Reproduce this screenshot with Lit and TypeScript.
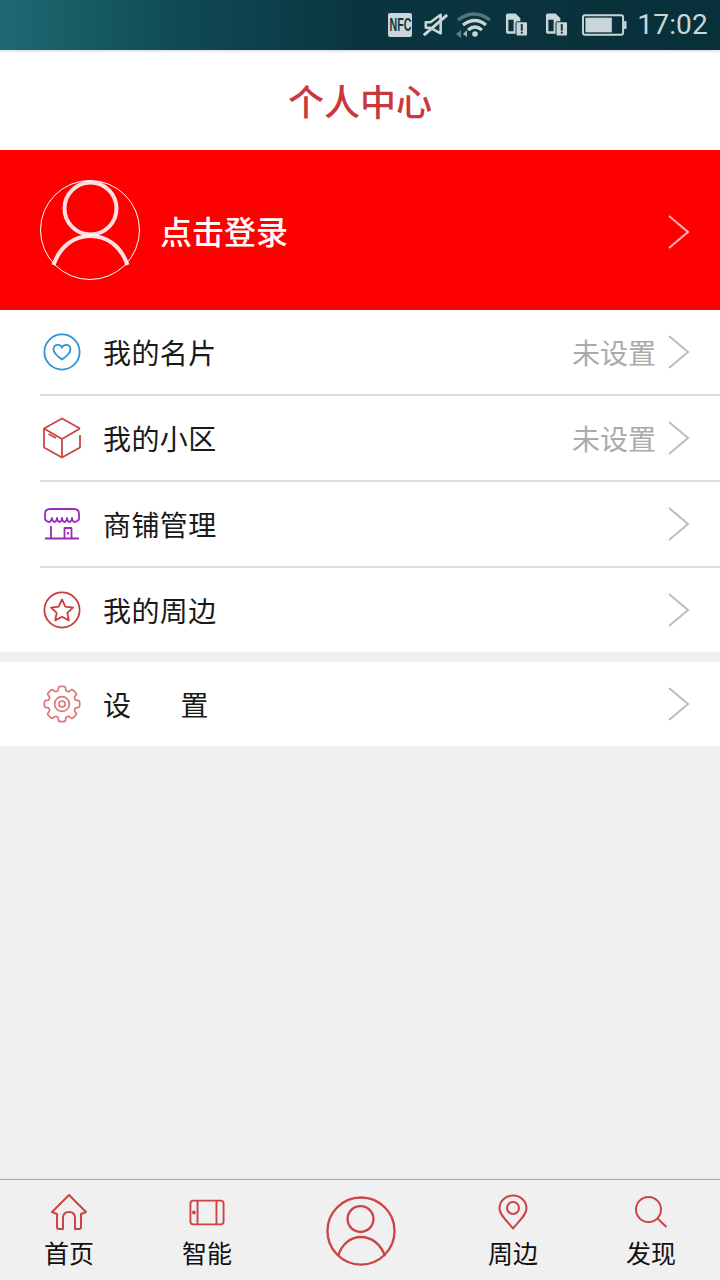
import { LitElement, html, css } from "lit";
import { customElement } from "lit/decorators.js";

const chevron = html`<svg class="chev" width="24" height="36" viewBox="0 0 24 36"><path d="M2 2 L21 18 L2 34" fill="none" stroke="currentColor" stroke-width="2"/></svg>`;

const red = "#cc4444";

// Eight flat-topped cog teeth around a centre of (19, 19), with softened corners.
function gearPath(): string {
  const pts: [number, number][] = [];
  const polar = (deg: number, r: number): [number, number] => {
    const a = ((deg - 90) * Math.PI) / 180;
    return [19 + r * Math.cos(a), 19 + r * Math.sin(a)];
  };
  for (let i = 0; i < 8; i++) {
    const c = i * 45;
    pts.push(polar(c - 11, 18), polar(c + 11, 18), polar(c + 16, 13.8), polar(c + 29, 13.8));
  }
  const lerp = (a: [number, number], b: [number, number], t: number) =>
    `${(a[0] + (b[0] - a[0]) * t).toFixed(2)} ${(a[1] + (b[1] - a[1]) * t).toFixed(2)}`;
  let d = "";
  pts.forEach((p, i) => {
    const prev = pts[(i + pts.length - 1) % pts.length];
    const next = pts[(i + 1) % pts.length];
    d += `${i === 0 ? "M" : "L"}${lerp(p, prev, 0.35)} Q${p[0].toFixed(2)} ${p[1].toFixed(2)} ${lerp(p, next, 0.35)} `;
  });
  return d + "Z";
}

const icons: Record<string, unknown> = {
  heart: html`<svg width="40" height="40" viewBox="0 0 40 40" fill="none" stroke="#2b96d6" stroke-width="1.8"><circle cx="20" cy="20" r="17.6"/><path d="M20 27.5 C15 24 11.5 21 11.5 17.2 C11.5 14.4 13.6 12.8 15.8 12.8 C17.6 12.8 19.2 13.7 20 15.4 C20.8 13.7 22.4 12.8 24.2 12.8 C26.4 12.8 28.5 14.4 28.5 17.2 C28.5 21 25 24 20 27.5 Z"/></svg>`,
  box: html`<svg width="40" height="42" viewBox="0 0 40 42" fill="none" stroke="${red}" stroke-width="1.8" stroke-linejoin="round"><path d="M38 11.5 L20 1.5 L2 11.5 V30.5 L20 40.5 L38 30.5 V18"/><path d="M2 11.5 L20 22 L38 11.5 M20 22 V40.5"/><path d="M6.5 17 L14 21"/></svg>`,
  shop: html`<svg width="38" height="34" viewBox="0 0 38 34" fill="none" stroke="#9a2bc0" stroke-width="1.8" stroke-linejoin="round"><path d="M3 14 L2 12 V7 Q2 2 7 2 H31 Q36 2 36 7 V12 L35 14"/><path d="M3 13 Q4 15 6 15 Q8 15 9 11 Q9.5 15 11.5 15 Q13.5 15 14 11 Q14.5 15 16.5 15 Q18.5 15 19 11 Q19.5 15 21.5 15 Q23.5 15 24 11 Q24.5 15 26.5 15 Q28.5 15 29 11 Q29.5 15 31.5 15 Q33.5 15 35 13"/><path d="M2 31.5 H36 M8 19 V31 M21.5 31 V21 H28.5 V31 M25 25 V27.5"/></svg>`,
  star: html`<svg width="38" height="38" viewBox="0 0 38 38" fill="none" stroke="#cc3c3c" stroke-width="1.8" stroke-linejoin="round"><circle cx="19" cy="19" r="17.6"/><path d="M19 8.5 L22.3 15.6 L30 16.6 L24.3 21.8 L25.8 29.4 L19 25.7 L12.2 29.4 L13.7 21.8 L8 16.6 L15.7 15.6 Z"/></svg>`,
  gear: html`<svg width="38" height="38" viewBox="0 0 38 38" fill="none" stroke="#df7676" stroke-width="1.7"><path d="${gearPath()}"/><circle cx="19" cy="19" r="7.4"/><circle cx="19" cy="19" r="3"/></svg>`,
  home: html`<svg width="38" height="38" viewBox="0 0 38 38" fill="none" stroke="${red}" stroke-width="2" stroke-linejoin="round"><path d="M19 2 L36 19 L31 21 V34 Q31 36 29 36 H25 V25 Q25 19 19 19 Q13 19 13 25 V36 H9 Q7 36 7 34 V21 L2 19 Z"/></svg>`,
  tablet: html`<svg width="36" height="27" viewBox="0 0 38 28" fill="none" stroke="${red}" stroke-width="2"><rect x="1.5" y="1.5" width="35" height="25" rx="3"/><path d="M9 1.5 V26.5 M29 1.5 V26.5"/><circle cx="5.2" cy="14" r="1" fill="${red}"/></svg>`,
  pin: html`<svg width="30" height="36" viewBox="0 0 30 36" fill="none" stroke="${red}" stroke-width="2" stroke-linejoin="round"><path d="M15 34.5 C8 26 1.5 20.5 1.5 14.5 C1.5 7 7.5 1.5 15 1.5 C22.5 1.5 28.5 7 28.5 14.5 C28.5 20.5 22 26 15 34.5 Z"/><circle cx="15" cy="14" r="6"/></svg>`,
  search: html`<svg width="34" height="34" viewBox="0 0 34 34" fill="none" stroke="${red}" stroke-width="2"><circle cx="14.5" cy="14.5" r="12.5"/><path d="M23.5 23.5 L32.5 32"/></svg>`,
};

const rows1 = [
  { icon: "heart", label: "我的名片", value: "未设置" },
  { icon: "box", label: "我的小区", value: "未设置" },
  { icon: "shop", label: "商铺管理", value: "" },
  { icon: "star", label: "我的周边", value: "" },
];

const tabs = [
  { icon: "home", label: "首页" },
  { icon: "tablet", label: "智能" },
  { icon: "", label: "" },
  { icon: "pin", label: "周边" },
  { icon: "search", label: "发现" },
];

@customElement("app-root")
export class AppRoot extends LitElement {
  static styles = css`
    :host {
      display: flex;
      flex-direction: column;
      width: 720px;
      height: 1280px;
      background: #efefef;
      font-family: "Noto Sans CJK SC", "Liberation Sans", sans-serif;
      overflow: hidden;
    }
    .status {
      height: 50px;
      flex: none;
      background: linear-gradient(90deg, #1e6a72 0%, #0f4a54 25%, #0a3540 50%, #08303a 100%);
      display: flex;
      align-items: center;
      justify-content: flex-end;
      color: #c9d6d8;
      box-shadow: 0 1px 3px rgba(0, 0, 0, 0.18);
      position: relative;
    }
    .status svg { display: block; flex: none; }
    .nfc {
      width: 24px; height: 24px; margin-right: 11px; background: #c9d6d8; color: #0c3a44;
      border-radius: 2px; display: flex; align-items: center; justify-content: center; flex: none;
    }
    .nfc span { font: 700 19px/24px "Liberation Sans", sans-serif; display: block; transform: scaleX(0.56); white-space: nowrap; }
    .mute { margin-right: 7px; }
    .wifi { margin-right: 13px; }
    .sim { margin-right: 17px; }
    .sim2 { margin-right: 14px; }
    .batt { margin-right: 10px; }
    .time { font: 400 28px/50px Roboto, sans-serif; margin-right: 12px; letter-spacing: 0.2px; }

    .title {
      height: 100px; flex: none; background: #fff; display: flex; align-items: center; justify-content: center;
      color: #c9383c; font-size: 36px; font-weight: 500; line-height: 1;
    }
    .banner {
      height: 160px; flex: none; background: #ff0000; display: flex; align-items: center;
      padding: 0 29px 0 40px; color: #fff; box-sizing: border-box;
    }
    .avatar { width: 100px; height: 100px; flex: none; margin-right: 20px; display: block; }
    .login { flex: 1; font-size: 32px; font-weight: 500; line-height: 1; }
    .banner .chev { color: #ffb3b3; margin-top: 3px; }

    .group { background: #fff; flex: none; }
    .group.gap { margin-top: 10px; }
    .row {
      display: flex; align-items: center; height: 86px; margin-left: 40px; padding-right: 29px;
      border-bottom: 2px solid #dcdcdc; box-sizing: border-box; color: #1a1a1a;
    }
    .row:last-child { border-bottom: 0; height: 84px; }
    .ico { width: 44px; display: flex; justify-content: center; align-items: center; margin-right: 19px; flex: none; }
    .label { flex: 1; font-size: 28px; line-height: 1; letter-spacing: 0.4px; }
    .label.spread { display: flex; gap: 49px; }
    .value { font-size: 28px; line-height: 1; color: #ababab; margin-right: 11px; }
    .row .chev { color: #bdbdbd; flex: none; }

    .spacer { flex: 1; }
    .tabbar {
      flex: none; height: 101px; border-top: 1px solid #a9a9a9; box-sizing: border-box; background: #f0f0f0;
      display: grid; grid-template-columns: 138px 138px 168px 138px 138px;
    }
    .tab { display: flex; flex-direction: column; align-items: center; color: #111; font-size: 25px; line-height: 1; }
    .tab .tabicon { height: 44px; margin-top: 10px; display: flex; align-items: center; justify-content: center; }
    .tab span { margin-top: 6px; }
    .center { display: flex; align-items: center; justify-content: center; padding: 2px 0 0 2px; }
  `;

  statusBar() {
    const c = "#c9d6d8";
    const sim = (cls: string) => html`<svg class=${cls} width="23" height="26" viewBox="0 0 24 26">
      <path d="M1 3 Q1 1 3 1 H11 L16 6 V9 H13 Q11 9 11 11 V22 H3 Q1 22 1 20 Z M3.5 7.5 V19.5 H9 V7.5 Z" fill="${c}" fill-rule="evenodd"/>
      <rect x="12" y="10" width="11" height="14" rx="1" fill="${c}"/>
      <rect x="16.5" y="12" width="2" height="7" fill="#0b3843"/><rect x="16.5" y="20" width="2" height="2" fill="#0b3843"/>
    </svg>`;
    return html`<div class="status">
      <div class="nfc"><span>NFC</span></div>
      <svg class="mute" width="26" height="26" viewBox="0 0 28 26" fill="none" stroke="${c}" stroke-width="2.8">
        <path d="M3 10 H8 L19 2 V22 L8 16 H3 Z" stroke-linejoin="round"/><path d="M1 24 L26 2" stroke-width="3.2"/>
      </svg>
      <svg class="wifi" width="36" height="26" viewBox="0 0 36 26" fill="none" stroke="${c}">
        <path d="M2 8 Q18 -4 34 8" stroke-width="3.2" opacity="0.4"/>
        <path d="M7 13 Q19 4 30 13" stroke-width="3.2"/><path d="M12 18 Q19 12 26 18" stroke-width="3.2"/>
        <circle cx="19" cy="22" r="2.8" fill="${c}" stroke="none"/>
        <path d="M0 22 L5 18 V26 Z" fill="${c}" stroke="none" opacity="0.45"/>
        <path d="M11 18 L7 22 L11 25 Z" fill="${c}" stroke="none" opacity="0.8"/>
      </svg>
      ${sim("sim")}
      ${sim("sim2")}
      <svg class="batt" width="45" height="24" viewBox="0 0 46 24" fill="none">
        <rect x="1" y="2" width="41" height="20" rx="2" stroke="${c}" stroke-width="2"/>
        <rect x="3.5" y="4.5" width="27" height="15" fill="${c}"/>
        <rect x="43" y="8" width="2.5" height="8" fill="${c}"/>
      </svg>
      <div class="time">17:02</div>
    </div>`;
  }

  row(icon: string, label: unknown, value: string) {
    return html`<div class="row">
      <div class="ico">${icons[icon]}</div>
      ${label}
      ${value ? html`<div class="value">${value}</div>` : ""}
      ${chevron}
    </div>`;
  }

  render() {
    return html`
      ${this.statusBar()}
      <div class="title">个人中心</div>
      <div class="banner">
        <svg class="avatar" viewBox="0 0 100 100" fill="none" stroke="#fff">
          <circle cx="50" cy="50" r="49.5" stroke-width="1"/>
          <circle cx="50.5" cy="28.5" r="26" stroke-width="4" stroke-opacity="0.88"/>
          <path d="M13.5 85 C20 66 34 56 50.5 56 C67 56 81 66 87.5 85" stroke-width="4" stroke-opacity="0.88"/>
        </svg>
        <div class="login">点击登录</div>
        ${chevron}
      </div>
      <div class="group">
        ${rows1.map((r) => this.row(r.icon, html`<div class="label">${r.label}</div>`, r.value))}
      </div>
      <div class="group gap">
        ${this.row("gear", html`<div class="label spread"><span>设</span><span>置</span></div>`, "")}
      </div>
      <div class="spacer"></div>
      <div class="tabbar">
        ${tabs.map((t) =>
          t.icon
            ? html`<div class="tab"><div class="tabicon">${icons[t.icon]}</div><span>${t.label}</span></div>`
            : html`<div class="center">
                <svg width="70" height="70" viewBox="0 0 72 72" fill="none" stroke="${red}" stroke-width="2.4">
                  <circle cx="36" cy="36" r="34.5"/>
                  <circle cx="35.5" cy="23.7" r="13.3"/>
                  <path d="M12.5 62 C15.5 50 25 42.2 36 42.2 C47 42.2 57 50 60.5 62"/>
                </svg>
              </div>`
        )}
      </div>
    `;
  }
}
